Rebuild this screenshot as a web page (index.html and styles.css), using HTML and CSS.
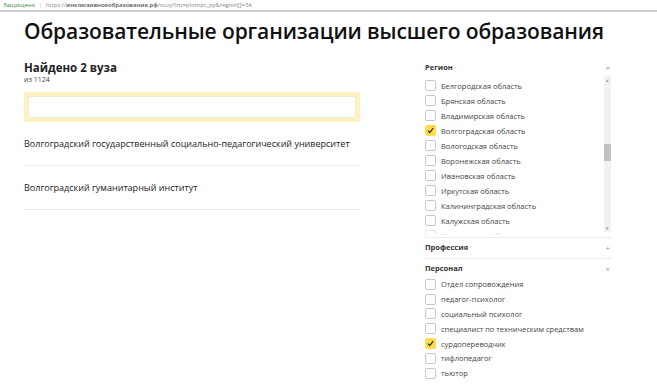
FILE: index.html
```
<!DOCTYPE html>
<html lang="ru">
<head>
    <meta charset="UTF-8">
    <meta name="viewport" content="width=device-width, initial-scale=1.0">
    <title>Образовательные организации высшего образования</title>
    <link rel="stylesheet" href="styles.css">
</head>
<body>
    <div class="topbar">
        <span class="secure">Защищено</span>
        <span class="sep">|</span>
        <span class="url">https://<b>инклюзивноеобразование.рф</b>/vuzy?int=plompt_py&amp;region[]=34</span>
    </div>

    <div class="page">
        <h1>Образовательные организации высшего образования</h1>

        <div class="content">
            <div class="results">
                <div class="found">Найдено 2 вуза</div>
                <div class="total">из 1124</div>
                <div class="search"><input type="text"></div>
                <div class="item">Волгоградский государственный социально-педагогический университет</div>
                <div class="item">Волгоградский гуманитарный институт</div>
            </div>

            <div class="filters">
                <div class="group">
                    <div class="group-head">
                        <span>Регион</span>
                        <span class="toggle">×</span>
                    </div>
                    <div class="scrollbox">
                        <div class="options">
                            <label class="option"><span class="box"></span>Белгородская область</label>
                            <label class="option"><span class="box"></span>Брянская область</label>
                            <label class="option"><span class="box"></span>Владимирская область</label>
                            <label class="option"><span class="box checked"><svg viewBox="0 0 10 10"><path d="M2.2 5.2 L4.2 7.4 L8 2.4"/></svg></span>Волгоградская область</label>
                            <label class="option"><span class="box"></span>Вологодская область</label>
                            <label class="option"><span class="box"></span>Воронежская область</label>
                            <label class="option"><span class="box"></span>Ивановская область</label>
                            <label class="option"><span class="box"></span>Иркутская область</label>
                            <label class="option"><span class="box"></span>Калининградская область</label>
                            <label class="option"><span class="box"></span>Калужская область</label>
                            <label class="option faded"><span class="box"></span>Кемеровская область</label>
                        </div>
                        <div class="scrollbar">
                            <span class="arrow">▴</span>
                            <span class="thumb"></span>
                            <span class="arrow down">▾</span>
                        </div>
                    </div>
                </div>

                <div class="group">
                    <div class="group-head">
                        <span>Профессия</span>
                        <span class="toggle">+</span>
                    </div>
                </div>

                <div class="group last">
                    <div class="group-head">
                        <span>Персонал</span>
                        <span class="toggle">×</span>
                    </div>
                    <div class="options tight">
                        <label class="option"><span class="box"></span>Отдел сопровождения</label>
                        <label class="option"><span class="box"></span>педагог-психолог</label>
                        <label class="option"><span class="box"></span>социальный психолог</label>
                        <label class="option"><span class="box"></span>специалист по техническим средствам</label>
                        <label class="option"><span class="box checked"><svg viewBox="0 0 10 10"><path d="M2.2 5.2 L4.2 7.4 L8 2.4"/></svg></span>сурдопереводчик</label>
                        <label class="option"><span class="box"></span>тифлопедагог</label>
                        <label class="option"><span class="box"></span>тьютор</label>
                    </div>
                </div>
            </div>
        </div>
    </div>
</body>
</html>
```

FILE: styles.css
```
body {
    margin: 0;
    font-family: "Open Sans", "Noto Sans", sans-serif;
    color: #222;
    background: #fff;
    overflow: hidden;
}
.topbar {
    height: 10px;
    padding-left: 3px;
    font-size: 6px;
    line-height: 10px;
    color: #888;
    border-bottom: 2px solid #d0d0d0;
    white-space: nowrap;
}
.topbar .secure {
    color: #3a8a3a;
}
.topbar .sep {
    color: #bbb;
    margin: 0 2px;
}
.topbar b {
    color: #555;
    font-weight: 600;
}
.page {
    padding: 0 24px;
}
h1 {
    margin: 3px 0 0;
    font-size: 21px;
    line-height: 32px;
    font-weight: 600;
    color: #111;
    letter-spacing: -0.1px;
    white-space: nowrap;
}
.content {
    display: flex;
    gap: 65px;
    margin-top: 14px;
}
.results {
    width: 336px;
}
.found {
    font-size: 11.5px;
    font-weight: 700;
    line-height: 14px;
}
.total {
    font-size: 7px;
    line-height: 10px;
    color: #444;
}
.search {
    margin-top: 7px;
    border: 4px solid #fdf1c0;
    height: 22px;
}
.search input {
    display: block;
    width: 100%;
    height: 100%;
    box-sizing: border-box;
    border: 1px solid #f3ecd0;
    outline: none;
}
.item {
    font-size: 9px;
    line-height: 12px;
    padding: 16px 0 15px;
    border-bottom: 1px solid #ececec;
}
.results .item:first-of-type {
    padding-top: 18px;
}
.filters {
    width: 187px;
    margin-top: -3px;
}
.group {
    border-bottom: 1px solid #ececec;
    padding-bottom: 2px;
}
.group.last {
    border-bottom: none;
}
.group-head {
    display: flex;
    justify-content: space-between;
    align-items: center;
    height: 18px;
    font-size: 7.5px;
    font-weight: 700;
    color: #333;
}
.toggle {
    font-weight: 400;
    color: #999;
    font-size: 8px;
    margin-right: 2px;
}
.scrollbox {
    position: relative;
    height: 159px;
    overflow: hidden;
}
.options {
    padding-top: 2px;
}
.options.tight {
    padding-top: 0;
}
.option {
    display: flex;
    align-items: center;
    gap: 5px;
    height: 15px;
    font-size: 7.5px;
    color: #444;
}
.options.tight .option {
    height: 14.8px;
}
.option.faded {
    opacity: 0.35;
}
.box {
    width: 9px;
    height: 9px;
    border: 1px solid #c8c8c8;
    border-radius: 2px;
    flex: none;
    display: flex;
}
.box.checked {
    background: #ffdb4d;
    border-color: #ffdb4d;
}
.box svg {
    width: 9px;
    height: 9px;
}
.box path {
    fill: none;
    stroke: #222;
    stroke-width: 1.3;
}
.scrollbar {
    position: absolute;
    top: 0;
    right: 1px;
    bottom: 3px;
    width: 7px;
    background: #f1f1f1;
    display: flex;
    flex-direction: column;
    align-items: center;
}
.arrow {
    font-size: 5px;
    line-height: 8px;
    color: #999;
}
.thumb {
    width: 7px;
    height: 17px;
    background: #c1c1c1;
    margin-top: 60px;
}
.arrow.down {
    margin-top: auto;
}
```
